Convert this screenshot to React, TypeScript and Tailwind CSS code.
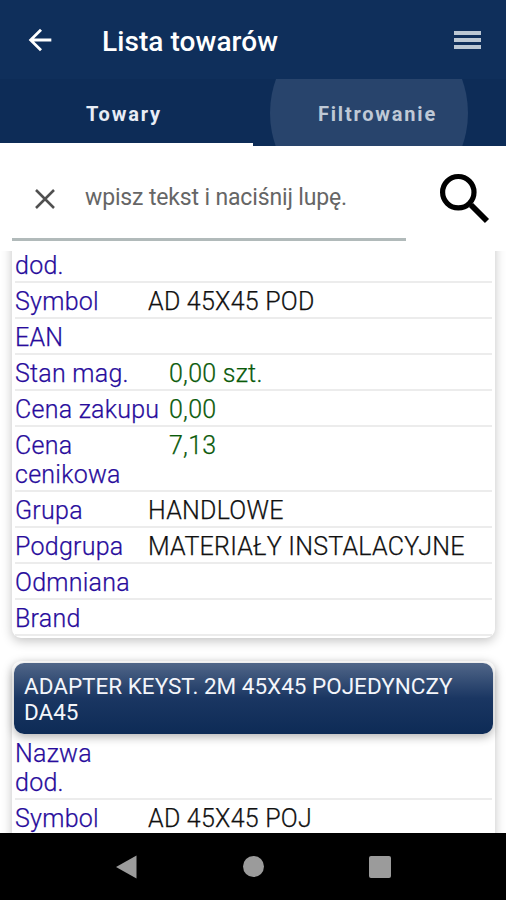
import React from 'react';

interface Field {
  label: string;
  value?: string;
  isNumber?: boolean; // Stock and prices are green and indented
}

interface Product {
  id: number;
  title?: string;
  fields: Field[];
}

const products: Product[] = [
  {
    id: 1,
    fields: [
      { label: 'Nazwa dod.' },
      { label: 'Symbol', value: 'AD 45X45 POD' },
      { label: 'EAN' },
      { label: 'Stan mag.', value: '0,00 szt.', isNumber: true },
      { label: 'Cena zakupu', value: '0,00', isNumber: true },
      { label: 'Cena cenikowa', value: '7,13', isNumber: true },
      { label: 'Grupa', value: 'HANDLOWE' },
      { label: 'Podgrupa', value: 'MATERIAŁY INSTALACYJNE' },
      { label: 'Odmniana' },
      { label: 'Brand' },
    ],
  },
  {
    id: 2,
    title: 'ADAPTER KEYST. 2M 45X45 POJEDYNCZY DA45',
    fields: [
      { label: 'Nazwa dod.' },
      { label: 'Symbol', value: 'AD 45X45 POJ' },
    ],
  },
];

const FieldRow: React.FC<{ field: Field }> = ({ field }) => (
  <div className="flex border-b-2 border-[#ececec] pt-[4px] pb-[0.5px] text-[25px] leading-[29.4px] font-light tracking-[0.25px] [-webkit-text-stroke:0.25px]">
    <div className={field.isNumber ? 'w-[154px] shrink-0 text-[#280c9c]' : 'w-[133px] shrink-0 text-[#280c9c]'}>
      <span className={field.label === 'Cena zakupu' ? 'whitespace-nowrap' : 'block w-[125px]'}>{field.label}</span>
    </div>
    <div className={field.isNumber ? 'whitespace-nowrap text-[#0a5a0a]' : 'whitespace-nowrap text-[#111111]'}>
      {field.value}
    </div>
  </div>
);

const ProductCard: React.FC<{ product: Product }> = ({ product }) => (
  <div className="rounded-[9px] bg-white p-[2px] shadow-[0_3px_11px_rgba(0,0,0,0.24)]">
    {product.title && (
      <h2 className="h-[71px] rounded-[10px] bg-linear-to-b from-[#506688] via-[#1a3662] via-50% to-[#0d2b56] pt-[10px] pl-[10px] text-[22.5px] leading-[26.4px] font-normal text-[#f4f6fb] shadow-[0_3px_10px_rgba(0,0,0,0.3)]">
        {product.title}
      </h2>
    )}
    <div className={product.title ? 'px-px pt-px pb-8' : 'px-px'}>
      {product.fields.map(field => (
        <FieldRow key={field.label} field={field} />
      ))}
    </div>
  </div>
);

const App: React.FC = () => {
  return (
    <div className="flex h-[900px] w-[506px] flex-col overflow-hidden bg-white font-['Roboto','Noto_Sans',sans-serif]">
      {/* App bar */}
      <header className="flex h-[79px] shrink-0 items-center bg-[#0f2f5b] pr-[25px] pl-[23px]">
        <svg className="h-[34px] w-[34px]" viewBox="0 0 24 24" fill="#ffffff">
          <path d="M20 10.9H7.83l5.59-5.49L12 4l-8 8 8 8 1.41-1.41L7.83 13.1H20v-2.2z" />
        </svg>
        <h1 className="ml-[45px] flex-1 pt-[5px] text-[28px] font-medium tracking-[0.08px] text-white">Lista towarów</h1>
        <div className="flex w-[27px] flex-col gap-[3px]">
          <span className="h-1 bg-[#bcc8d4]" />
          <span className="h-1 bg-[#bcc8d4]" />
          <span className="h-1 bg-[#bcc8d4]" />
        </div>
      </header>

      {/* Tabs */}
      <nav className="flex h-[67px] shrink-0 bg-[#0d2c57] text-[20px] font-bold tracking-[1.8px]">
        <div className="flex w-[253px] items-center justify-center border-b-[3px] border-white pt-[5px] pr-[5px] text-[#e8edf6]">
          Towary
        </div>
        <div className="relative flex flex-1 items-center justify-center overflow-hidden pt-[2px] pr-[4px] text-[#bfc9d6]">
          <span className="absolute top-[-65px] left-[17px] h-[198px] w-[198px] rounded-full bg-[#28446c]" />
          <span className="relative">Filtrowanie</span>
        </div>
      </nav>

      {/* Search */}
      <div className="flex h-[105px] shrink-0 pl-3">
        <div className="flex h-[95px] w-[394px] items-center border-b-[3px] border-[#b1baba] pt-[13px] pl-[18px]">
          <svg className="h-[30px] w-[30px] shrink-0" viewBox="0 0 30 30" stroke="#505050" strokeWidth="2.5">
            <path d="M6 6l18 18M24 6L6 24" />
          </svg>
          <span className="ml-[25px] pb-px text-[23px] tracking-[-0.15px] text-[#666666]">wpisz tekst i naciśnij lupę.</span>
        </div>
        <svg className="mt-[26px] ml-[32px] h-[52px] w-[52px]" viewBox="0 0 52 52" fill="none" stroke="#000000">
          <circle cx="20.3" cy="20.2" r="15.7" strokeWidth="5.2" />
          <path d="M31 31l4 4" strokeWidth="3.5" />
          <path d="M33 33L49 49" strokeWidth="5.8" />
        </svg>
      </div>

      {/* Product list, scrolled a little past the start of the first card */}
      <main className="flex-1 overflow-hidden">
        <div className="-mt-[35px] flex flex-col gap-[23px] pr-[11px] pl-3">
          {products.map(product => (
            <ProductCard key={product.id} product={product} />
          ))}
        </div>
      </main>

      {/* System navigation */}
      <footer className="flex h-[67px] shrink-0 items-center justify-center gap-[105px] bg-black">
        <svg className="h-6 w-[22px]" viewBox="0 0 22 24" fill="#9b9b9b">
          <path d="M0 12L20.5 .5v23z" />
        </svg>
        <span className="h-[21px] w-[21px] rounded-full bg-[#9b9b9b]" />
        <span className="h-[22px] w-[22px] rounded-[2px] bg-[#9b9b9b]" />
      </footer>
    </div>
  );
};

export default App;
